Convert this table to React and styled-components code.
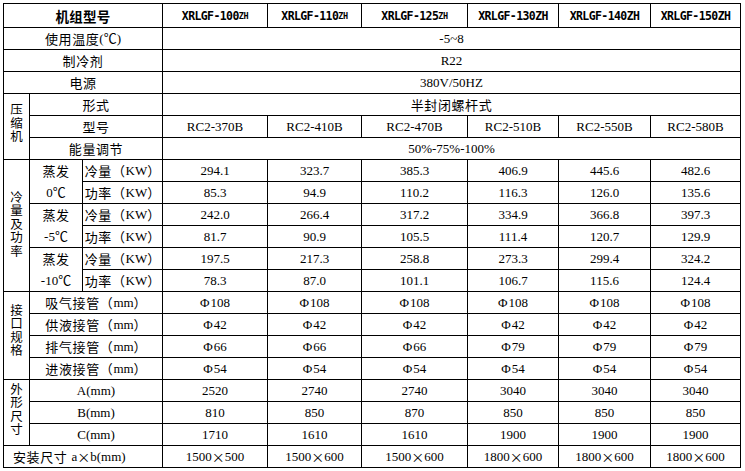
import React from "react";
import styled, { createGlobalStyle } from "styled-components";

const GlobalStyle = createGlobalStyle`
  html, body { margin: 0; padding: 0; background: #fff; }
  body {
    font-family: "Liberation Serif", "Noto Sans CJK SC", serif;
    color: #000;
  }
`;

const Page = styled.div`
  padding: 3px 0 0 3px;
`;

const Sheet = styled.div`
  display: grid;
  grid-template-columns: 26px 53px 80px 105px 94px 106px 91px 92px 90px;
  grid-template-rows: 24px repeat(20, 22px);
  width: max-content;
  border-left: 1px solid #000;
  border-top: 1px solid #000;
`;

const Cell = styled.div`
  grid-column: ${(p) => p.$col};
  grid-row: ${(p) => p.$row};
  box-sizing: border-box;
  border-right: 1px solid #000;
  border-bottom: 1px solid #000;
  display: flex;
  align-items: center;
  justify-content: ${(p) => (p.$left ? "flex-start" : "center")};
  padding-left: ${(p) => (p.$left ? "9px" : "0")};
  font-size: 13px;
  line-height: 16px;
  white-space: nowrap;
  overflow: hidden;
`;

const TitleCell = styled(Cell)`
  font-family: "Noto Sans CJK SC", sans-serif;
  font-weight: 700;
  font-size: 13.5px;
  letter-spacing: 0.3px;
`;

const ModelCell = styled(Cell)`
  font-family: "DejaVu Sans Mono", monospace;
  font-weight: 700;
  font-size: 11.5px;
  letter-spacing: -0.6px;
  padding-top: 1px;
`;

const Suffix = styled.span`
  font-size: 8.5px;
  letter-spacing: -0.4px;
`;

const GroupCell = styled(Cell)`
  padding-bottom: ${(p) => p.$lift || 0}px;
`;

const Stack = styled.div`
  width: 14px;
  font-family: "Noto Sans CJK SC", sans-serif;
  font-size: 12.5px;
  line-height: 13.5px;
  white-space: normal;
  word-break: break-all;
  text-align: center;
`;

const PairCell = styled(Cell)`
  flex-direction: column;
  line-height: 22px;
`;

const Cjk = styled.span`
  font-family: "Noto Sans CJK SC", sans-serif;
  letter-spacing: ${(p) => p.$spread || 0}px;
  margin-right: ${(p) => p.$gap || 0}px;
`;

const Cross = styled.span`
  font-family: "Noto Sans CJK SC", sans-serif;
  display: inline-block;
  width: 13px;
  text-align: center;
`;

const Phi = styled.span`
  margin-right: 1px;
`;

const models = [
  { num: "100", small: true },
  { num: "110", small: true },
  { num: "125", small: true },
  { num: "130", small: false },
  { num: "140", small: false },
  { num: "150", small: false },
];

const types = ["RC2-370B", "RC2-410B", "RC2-470B", "RC2-510B", "RC2-550B", "RC2-580B"];

const evaporation = [
  {
    temp: "0℃",
    cool: ["294.1", "323.7", "385.3", "406.9", "445.6", "482.6"],
    power: ["85.3", "94.9", "110.2", "116.3", "126.0", "135.6"],
  },
  {
    temp: "-5℃",
    cool: ["242.0", "266.4", "317.2", "334.9", "366.8", "397.3"],
    power: ["81.7", "90.9", "105.5", "111.4", "120.7", "129.9"],
  },
  {
    temp: "-10℃",
    cool: ["197.5", "217.3", "258.8", "273.3", "299.4", "324.2"],
    power: ["78.3", "87.0", "101.1", "106.7", "115.6", "124.4"],
  },
];

const pipes = [
  { name: "吸气接管", values: ["108", "108", "108", "108", "108", "108"] },
  { name: "供液接管", values: ["42", "42", "42", "42", "42", "42"] },
  { name: "排气接管", values: ["66", "66", "66", "79", "79", "79"] },
  { name: "进液接管", values: ["54", "54", "54", "54", "54", "54"] },
];

const dims = [
  { name: "A", values: ["2520", "2740", "2740", "3040", "3040", "3040"] },
  { name: "B", values: ["810", "850", "870", "850", "850", "850"] },
  { name: "C", values: ["1710", "1610", "1610", "1900", "1900", "1900"] },
];

const installs = [
  ["1500", "500"],
  ["1500", "600"],
  ["1500", "600"],
  ["1800", "600"],
  ["1800", "600"],
  ["1800", "600"],
];

const ValueRow = ({ row, values }) =>
  values.map((v, i) => (
    <Cell key={i} $row={row} $col={`${i + 4} / ${i + 5}`}>
      {v}
    </Cell>
  ));

const Wide = ({ row, children }) => (
  <Cell $row={row} $col="4 / 10">
    {children}
  </Cell>
);

export default function App() {
  return (
    <>
      <GlobalStyle />
      <Page>
        <Sheet>
          {/* header */}
          <TitleCell $row="1" $col="1 / 4">机组型号</TitleCell>
          {models.map((m, i) => (
            <ModelCell key={m.num} $row="1" $col={`${i + 4} / ${i + 5}`}>
              XRLGF-{m.num}
              {m.small ? <Suffix>ZH</Suffix> : "ZH"}
            </ModelCell>
          ))}

          {/* general */}
          <Cell $row="2" $col="1 / 4">
            <Cjk $spread={0.6}>使用温度</Cjk>(℃)
          </Cell>
          <Wide row="2">-5~8</Wide>
          <Cell $row="3" $col="1 / 4">
            <Cjk $spread={0.6}>制冷剂</Cjk>
          </Cell>
          <Wide row="3">R22</Wide>
          <Cell $row="4" $col="1 / 4">
            <Cjk $spread={0.6}>电源</Cjk>
          </Cell>
          <Wide row="4">380V/50HZ</Wide>

          {/* compressor */}
          <GroupCell $row="5 / 8" $col="1 / 2" $lift={8}>
            <Stack>压缩机</Stack>
          </GroupCell>
          <Cell $row="5" $col="2 / 4">
            <Cjk $spread={0.6}>形式</Cjk>
          </Cell>
          <Wide row="5">
            <Cjk $spread={0.6}>半封闭螺杆式</Cjk>
          </Wide>
          <Cell $row="6" $col="2 / 4">
            <Cjk $spread={0.6}>型号</Cjk>
          </Cell>
          <ValueRow row="6" values={types} />
          <Cell $row="7" $col="2 / 4">
            <Cjk $spread={0.6}>能量调节</Cjk>
          </Cell>
          <Wide row="7">50%-75%-100%</Wide>

          {/* cooling and power */}
          <GroupCell $row="8 / 14" $col="1 / 2" $lift={4}>
            <Stack>冷量及功率</Stack>
          </GroupCell>
          {evaporation.map((e, k) => {
            const r = 8 + k * 2;
            return (
              <React.Fragment key={e.temp}>
                <PairCell $row={`${r} / ${r + 2}`} $col="2 / 3">
                  <Cjk $spread={0.6}>蒸发</Cjk>
                  <span>{e.temp}</span>
                </PairCell>
                <Cell $row={`${r}`} $col="3 / 4">
                  <Cjk $spread={0.6}>冷量（</Cjk>KW<Cjk>）</Cjk>
                </Cell>
                <ValueRow row={`${r}`} values={e.cool} />
                <Cell $row={`${r + 1}`} $col="3 / 4">
                  <Cjk $spread={0.6}>功率（</Cjk>KW<Cjk>）</Cjk>
                </Cell>
                <ValueRow row={`${r + 1}`} values={e.power} />
              </React.Fragment>
            );
          })}

          {/* connections */}
          <GroupCell $row="14 / 18" $col="1 / 2" $lift={12}>
            <Stack>接口规格</Stack>
          </GroupCell>
          {pipes.map((p, k) => (
            <React.Fragment key={p.name}>
              <Cell $row={`${14 + k}`} $col="2 / 4">
                <Cjk $spread={0.6}>{p.name}（</Cjk>mm<Cjk>）</Cjk>
              </Cell>
              {p.values.map((v, i) => (
                <Cell key={i} $row={`${14 + k}`} $col={`${i + 4} / ${i + 5}`}>
                  <Phi>Φ</Phi>
                  {v}
                </Cell>
              ))}
            </React.Fragment>
          ))}

          {/* outline dimensions */}
          <GroupCell $row="18 / 21" $col="1 / 2" $lift={8}>
            <Stack>外形尺寸</Stack>
          </GroupCell>
          {dims.map((d, k) => (
            <React.Fragment key={d.name}>
              <Cell $row={`${18 + k}`} $col="2 / 4">
                {d.name}(mm)
              </Cell>
              <ValueRow row={`${18 + k}`} values={d.values} />
            </React.Fragment>
          ))}

          {/* install */}
          <Cell $row="21" $col="1 / 4" $left>
            <Cjk $spread={0.6} $gap={4}>安装尺寸</Cjk>a<Cross>×</Cross>b(mm)
          </Cell>
          {installs.map(([a, b], i) => (
            <Cell key={i} $row="21" $col={`${i + 4} / ${i + 5}`}>
              {a}
              <Cross>×</Cross>
              {b}
            </Cell>
          ))}
        </Sheet>
      </Page>
    </>
  );
}
